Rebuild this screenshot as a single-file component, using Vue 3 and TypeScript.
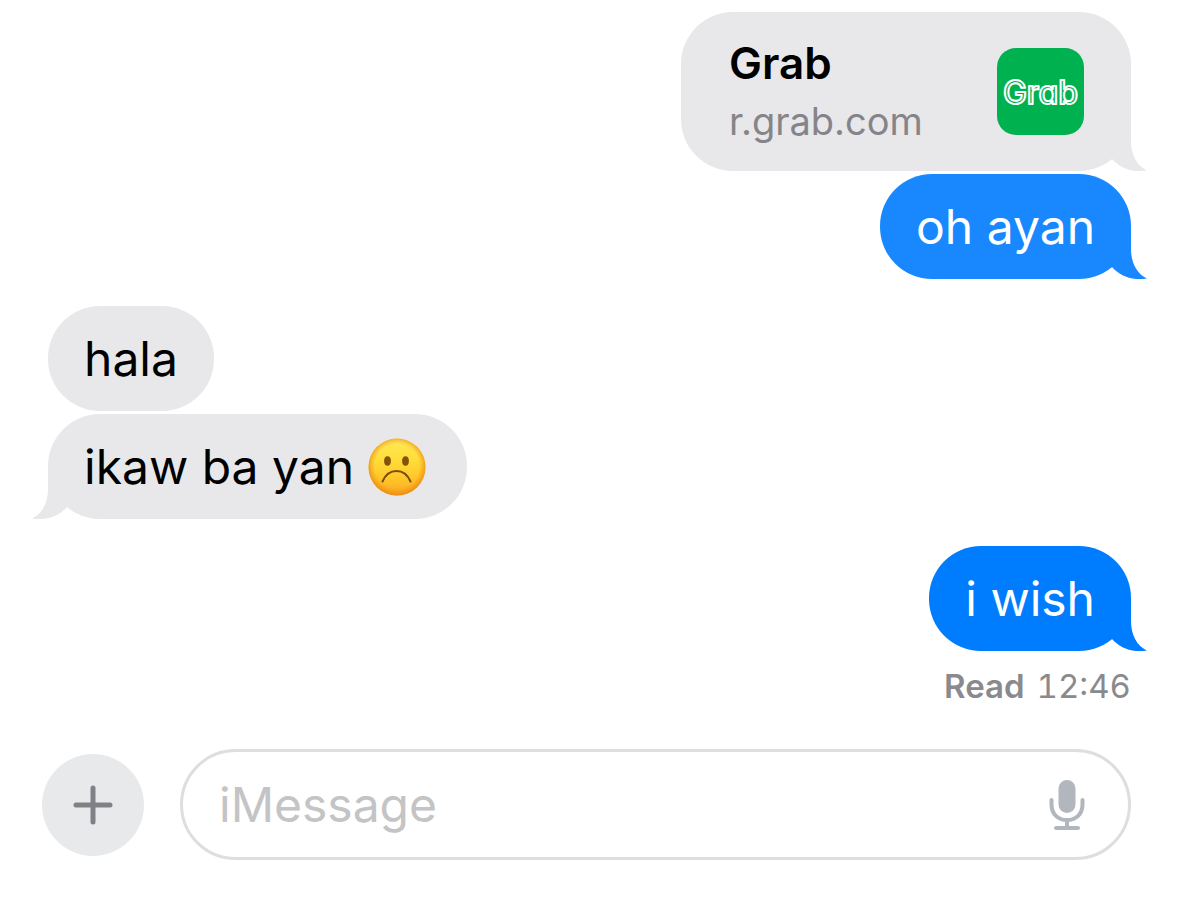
<script setup lang="ts">
import { ref } from 'vue'

interface Message {
  id: number
  text: string
  emoji?: boolean
  tail?: boolean
}

interface MessageGroup {
  side: 'sent' | 'received'
  tone?: 'light' | 'deep'
  messages: Message[]
}

const link = { title: 'Grab', host: 'r.grab.com', href: '#grab' }

const groups: MessageGroup[] = [
  { side: 'sent', tone: 'light', messages: [{ id: 1, text: 'oh ayan', tail: true }] },
  {
    side: 'received',
    messages: [
      { id: 2, text: 'hala' },
      { id: 3, text: 'ikaw ba yan', emoji: true, tail: true },
    ],
  },
  { side: 'sent', tone: 'deep', messages: [{ id: 4, text: 'i wish', tail: true }] },
]

const tailPath = 'M50 0V22C50 36 56 47 66 51.5C51 54 39 49 31 40L16 20Z'
const draft = ref('')
</script>

<template>
  <main class="chat">
    <section class="thread" aria-label="Conversation">
      <a class="bubble link-card" :href="link.href">
        <span class="link-copy">
          <strong class="link-title">{{ link.title }}</strong>
          <span class="link-host">{{ link.host }}</span>
        </span>
        <svg class="link-logo" viewBox="0 0 87 87" aria-hidden="true">
          <rect width="87" height="87" rx="19" fill="#00b14f" />
          <text class="wordmark" x="43.5" y="56" text-anchor="middle">Grab</text>
        </svg>
        <svg class="tail" viewBox="0 0 66 52" aria-hidden="true"><path :d="tailPath" /></svg>
      </a>

      <div v-for="(group, index) in groups" :key="index" class="group" :class="[group.side, group.tone]">
        <div v-for="message in group.messages" :key="message.id" class="bubble text-bubble">
          <span>{{ message.text }}</span>
          <svg v-if="message.emoji" class="emoji" viewBox="0 0 58 58" role="img" aria-label="frowning face">
            <defs>
              <linearGradient id="face" x1="0" y1="0" x2="0" y2="1">
                <stop offset="0" stop-color="#ffe75a" />
                <stop offset="0.35" stop-color="#ffdf3a" />
                <stop offset="0.7" stop-color="#ffc62a" />
                <stop offset="1" stop-color="#fba51f" />
              </linearGradient>
              <radialGradient id="rim" cx="0.5" cy="0.48" r="0.52">
                <stop offset="0.74" stop-color="#f39a1c" stop-opacity="0" />
                <stop offset="1" stop-color="#e98a14" stop-opacity="0.9" />
              </radialGradient>
            </defs>
            <circle cx="29" cy="29" r="28.5" fill="url(#face)" />
            <circle cx="29" cy="29" r="28.5" fill="url(#rim)" />
            <ellipse cx="19.5" cy="23" rx="3.4" ry="4.7" fill="#85520a" />
            <ellipse cx="37.5" cy="23" rx="3.4" ry="4.7" fill="#85520a" />
            <path d="M14.5 43.5C20.5 29.5 36.5 29.5 42.5 43.5" fill="none" stroke="#7a4b0a" stroke-width="2" stroke-linecap="round" />
          </svg>
          <svg v-if="message.tail" class="tail" viewBox="0 0 66 52" aria-hidden="true"><path :d="tailPath" /></svg>
        </div>
      </div>

      <p class="receipt"><strong>Read</strong><time>12:46</time></p>
    </section>

    <form class="composer" @submit.prevent>
      <button class="add" type="button" aria-label="Add attachment">
        <svg viewBox="0 0 40 40" aria-hidden="true">
          <path d="M20 3V37M3 20H37" fill="none" stroke="currentColor" stroke-width="5" stroke-linecap="round" />
        </svg>
      </button>
      <div class="field">
        <input v-model="draft" type="text" placeholder="iMessage" aria-label="iMessage" />
        <button class="mic" type="button" aria-label="Dictate">
          <svg viewBox="0 0 36 50" aria-hidden="true">
            <rect x="9.5" y="0" width="17" height="33" rx="8.5" fill="currentColor" />
            <path d="M2.5 20V24.5C2.5 34 9 40 18 40S33.5 34 33.5 24.5V20M18 40V48M7 48H29" fill="none" stroke="currentColor" stroke-width="4" stroke-linecap="round" />
          </svg>
        </button>
      </div>
    </form>
  </main>
</template>

<style>
body {
  margin: 0;
  background: #fff;
}
</style>

<style scoped>
.chat {
  box-sizing: border-box;
  padding: 12px 48px 38px;
  font-family: Inter, "Liberation Sans", sans-serif;
  color: #000;
}

.thread {
  display: flex;
  flex-direction: column;
}

.bubble {
  --fill: #e8e8ea;
  position: relative;
  display: flex;
  align-items: center;
  border-radius: 52px;
  background: var(--fill);
}

.link-card {
  box-sizing: border-box;
  align-self: flex-end;
  justify-content: space-between;
  width: 450px;
  max-width: 100%;
  min-height: 159px;
  margin-bottom: 3px;
  padding: 0 47px 0 48px;
  color: inherit;
  text-decoration: none;
}

.link-copy {
  display: flex;
  flex-direction: column;
}

.link-title {
  font-size: 44px;
  font-weight: 600;
  line-height: 58px;
}

.link-host {
  font-size: 38px;
  line-height: 58px;
  color: #858589;
}

.link-logo {
  width: 87px;
  height: 87px;
}

.wordmark {
  font-size: 32px;
  font-weight: 500;
  font-feature-settings: "cv11";
  fill: #00b14f;
  stroke: #fff;
  stroke-width: 2px;
  stroke-linejoin: round;
}

.group {
  display: flex;
  flex-direction: column;
  gap: 3px;
  margin-bottom: 27px;
}

.group:last-of-type {
  margin-bottom: 0;
}

.sent {
  align-items: flex-end;
}

.received {
  align-items: flex-start;
}

.text-bubble {
  gap: 9px;
  padding: 22px 36px;
  font-size: 48px;
  line-height: 61px;
}

.light .bubble {
  --fill: #1988ff;
  color: #fff;
}

.deep .bubble {
  --fill: #007cff;
  color: #fff;
}

.tail {
  position: absolute;
  right: -16px;
  bottom: 0;
  width: 66px;
  height: 52px;
  fill: var(--fill);
}

.text-bubble > span {
  position: relative;
  z-index: 1;
}

.received .tail {
  right: auto;
  left: -16px;
  transform: scaleX(-1);
}

.emoji {
  width: 58px;
  height: 58px;
  margin: 0 5px;
}

.receipt {
  display: flex;
  gap: 12px;
  align-self: flex-end;
  margin: 14px 0 0;
  font-size: 33px;
  line-height: 42px;
  color: #8a8a8e;
}

.receipt strong {
  font-weight: 600;
}

.receipt time {
  font-variant-numeric: tabular-nums;
}

.composer {
  display: flex;
  align-items: center;
  gap: 36px;
  margin: 42px 0 0 -6px;
}

button {
  display: grid;
  flex: none;
  place-items: center;
  padding: 0;
  border: 0;
  background: none;
}

.add {
  width: 102px;
  height: 102px;
  border-radius: 50%;
  background: #e8e9eb;
  color: #808186;
}

.add svg {
  width: 40px;
  height: 40px;
}

.field {
  box-sizing: border-box;
  display: flex;
  flex: 1;
  align-items: center;
  min-width: 0;
  height: 111px;
  padding: 0 43px 0 36px;
  border: 3px solid #dedee0;
  border-radius: 56px;
}

.field input {
  flex: 1;
  min-width: 0;
  padding: 0;
  border: 0;
  outline: 0;
  background: none;
  font: 400 48px/61px Inter, "Liberation Sans", sans-serif;
  color: #000;
}

.field input::placeholder {
  color: #c4c4c6;
  opacity: 1;
}

.mic {
  color: #b2b7be;
}

.mic svg {
  display: block;
  width: 36px;
  height: 50px;
}
</style>
